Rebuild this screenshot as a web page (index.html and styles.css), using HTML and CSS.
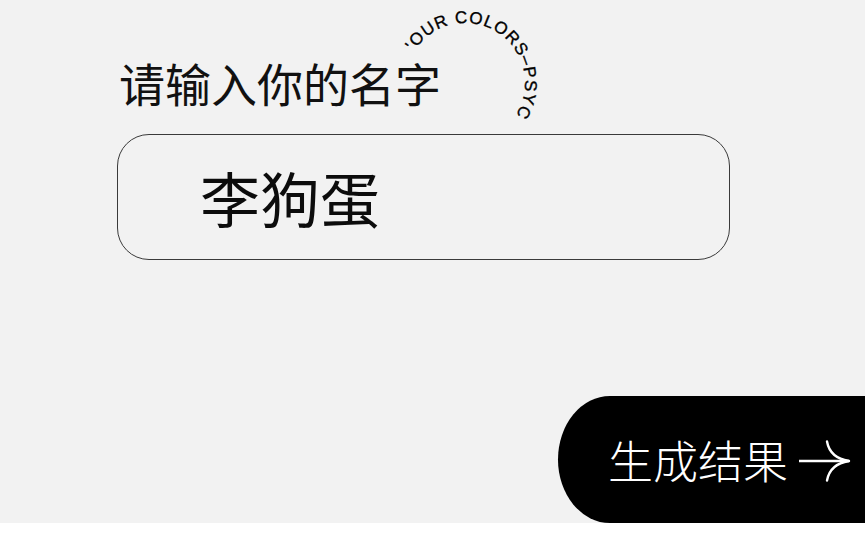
FILE: index.html
```html
<!DOCTYPE html>
<html lang="zh">
<head>
<meta charset="utf-8">
<link rel="stylesheet" href="styles.css">
</head>
<body>
<main class="page">
  <svg class="ring" width="160" height="140" viewBox="0 0 160 140">
    <defs>
      <path id="ringPath" d="M24.1 51.2 A60 60 0 1 1 125.9 114.8 A60 60 0 1 1 24.1 51.2"/>
    </defs>
    <text class="ring-text"><textPath href="#ringPath">'OUR COLORS–PSYC</textPath></text>
  </svg>
  <h1 class="title">请输入你的名字</h1>
  <div class="name-box"><span class="name">李狗蛋</span></div>
  <button class="go"><span class="go-label">生成结果</span><svg class="arrow" width="52" height="42" viewBox="0 0 52 42" aria-hidden="true"><path d="M0 21 H50" /><path d="M28 1.5 Q31 18 50 21 Q31 24 28 40.5" /></svg></button>
</main>
</body>
</html>
```
FILE: styles.css
```css
html, body {
  margin: 0;
  padding: 0;
  background: #ffffff;
}
body {
  font-family: "Noto Sans CJK SC", "Noto Sans", sans-serif;
}
.page {
  position: relative;
  height: 523px;
  box-sizing: border-box;
  padding-top: 59px;
  background: #f2f2f2;
  display: flex;
  flex-direction: column;
  overflow: hidden;
}
.ring {
  position: absolute;
  left: 390px;
  top: 0;
}
.ring-text {
  font-family: "Liberation Sans", Arial, sans-serif;
  font-size: 17px;
  letter-spacing: 1px;
  fill: #000;
  stroke: #000;
  stroke-width: 0.35px;
}
.title {
  margin: 0 0 0 119px;
  align-self: flex-start;
  font-size: 46px;
  line-height: 46px;
  font-weight: 400;
  color: #111;
}
.name-box {
  margin: 29px 0 0 117px;
  width: 613px;
  height: 126px;
  box-sizing: border-box;
  border: 1.5px solid #3a3a3a;
  border-radius: 32px;
  display: flex;
  align-items: center;
  padding-left: 82px;
}
.name {
  font-size: 60px;
  line-height: 60px;
  color: #0c0c0c;
}
.go {
  margin-top: auto;
  align-self: flex-end;
  width: 307px;
  height: 127px;
  box-sizing: border-box;
  border: none;
  background: #000;
  color: #fff;
  border-radius: 52px 0 0 52px / 63.5px 0 0 63.5px;
  display: flex;
  align-items: center;
  padding: 0 0 0 50px;
  font-family: "Noto Sans CJK SC", "Noto Sans", sans-serif;
}
.go-label {
  font-size: 45px;
  font-weight: 300;
  line-height: 45px;
  white-space: nowrap;
}
.arrow {
  margin-left: 11px;
  margin-top: 2px;
  fill: none;
  stroke: #fff;
  stroke-width: 2.4;
  stroke-linecap: round;
}
```
